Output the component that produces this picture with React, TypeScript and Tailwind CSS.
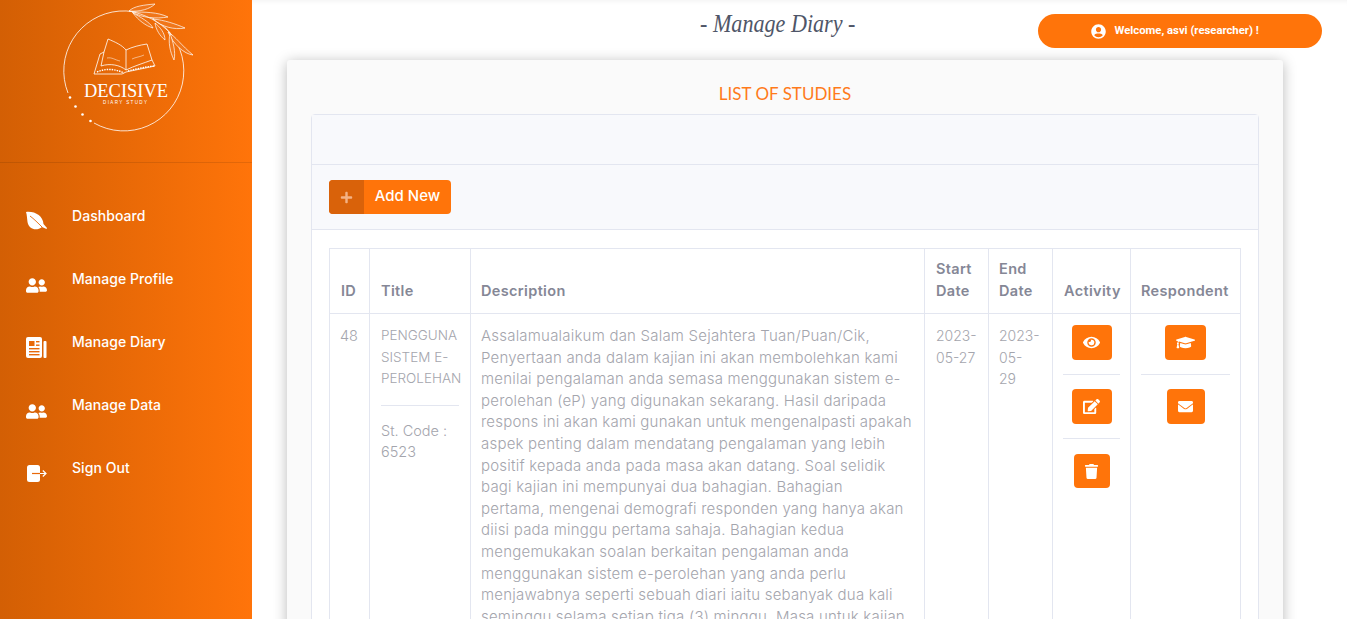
import { FaEdit, FaEnvelope, FaEye, FaGraduationCap, FaPlus, FaTrash, FaUserCircle, FaUserFriends } from 'react-icons/fa';

function LeafIcon() {
  return (
    <svg viewBox="0 0 21 21" className="mt-[6px] h-[21px] w-[21px]">
      <path d="M0 1 C9 0 17 5 17.500 13 L21 17 L20.500 18 L16 16 C11 20 3 19 1.500 11 C1 7 1 4 0 1 Z" fill="white" />
      <path d="M4 5 C8 8 12 12 16 16" fill="none" stroke="#e4690a" strokeWidth="0.9" />
    </svg>
  );
}

function PaperIcon() {
  return (
    <svg viewBox="0 0 21 21" className="mt-[6px] h-[21px] w-[21px]">
      <rect x="0" y="0" width="16" height="21" rx="2" fill="white" />
      <rect x="17.500" y="4" width="3" height="17" rx="1" fill="white" />
      <g fill="#e8690a">
        <rect x="3" y="4" width="5.500" height="5" />
        <rect x="10" y="4" width="3.500" height="1.400" />
        <rect x="10" y="7.500" width="3.500" height="1.400" />
        <rect x="3" y="11" width="10.500" height="1.400" />
        <rect x="3" y="14" width="10.500" height="1.400" />
        <rect x="3" y="17" width="10.500" height="1.400" />
      </g>
    </svg>
  );
}

function ExitIcon() {
  return (
    <svg viewBox="0 0 21 21" className="mt-[6px] h-[21px] w-[21px]">
      <rect x="1" y="2" width="13" height="17" rx="2.500" fill="white" />
      <path d="M6 10.500 H14" stroke="#e8690a" strokeWidth="1.200" />
      <path d="M14 10.500 H20 M16.800 7.500 L20 10.500 L16.800 13.500" fill="none" stroke="white" strokeWidth="1.200" />
    </svg>
  );
}

function UsersIcon() {
  return <FaUserFriends className="mt-[7px] h-[21px] w-[21px]" />;
}

const navItems = [
  { label: 'Dashboard', icon: LeafIcon },
  { label: 'Manage Profile', icon: UsersIcon },
  { label: 'Manage Diary', icon: PaperIcon },
  { label: 'Manage Data', icon: UsersIcon },
  { label: 'Sign Out', icon: ExitIcon },
];

const description = [
  'Assalamualaikum dan Salam Sejahtera Tuan/Puan/Cik,',
  'Penyertaan anda dalam kajian ini akan membolehkan kami',
  'menilai pengalaman anda semasa menggunakan sistem e-',
  'perolehan (eP) yang digunakan sekarang. Hasil daripada',
  'respons ini akan kami gunakan untuk mengenalpasti apakah',
  'aspek penting dalam mendatang pengalaman yang lebih',
  'positif kepada anda pada masa akan datang. Soal selidik',
  'bagi kajian ini mempunyai dua bahagian. Bahagian',
  'pertama, mengenai demografi responden yang hanya akan',
  'diisi pada minggu pertama sahaja. Bahagian kedua',
  'mengemukakan soalan berkaitan pengalaman anda',
  'menggunakan sistem e-perolehan yang anda perlu',
  'menjawabnya seperti sebuah diari iaitu sebanyak dua kali',
  'seminggu selama setiap tiga (3) minggu. Masa untuk kajian',
];

function Logo() {
  return (
    <svg width="140" height="135" viewBox="0 0 140 135" fill="none" stroke="white" strokeWidth="0.8">
      <path d="M8 93 A60 60 0 1 1 34 123" />
      <g fill="white" stroke="none">
        <circle cx="10" cy="97.500" r="1.300" />
        <circle cx="15.500" cy="106.500" r="1.300" />
        <circle cx="22.500" cy="114.500" r="1.300" />
        <circle cx="30.500" cy="121" r="1.300" />
      </g>
      {/* leaves */}
      <g strokeWidth="0.7" fill="#f0761a">
        <path d="M69 11 C74 6 84 5 95 4 C90 9 80 12 69 11 Z" />
        <path d="M72 12 C84 12 98 12 108 17 C96 19 82 18 72 12 Z" />
        <path d="M73 13 C80 17 90 22 93 28 C86 26 78 20 73 13 Z" />
        <path d="M93 19 C104 20 116 24 125 28 C114 30 102 27 93 19 Z" />
        <path d="M95 23 C100 27 105 33 105 40 C100 36 96 30 95 23 Z" />
        <path d="M108 32 C115 36 122 46 133 55 C124 54 113 44 108 32 Z" />
        <path d="M110 33 C113 42 116 52 114 60 C110 52 108 42 110 33 Z" />
        <path d="M69 11 C85 14 100 22 110 33" fill="none" />
      </g>
      {/* book */}
      <g strokeWidth="0.8">
        <path d="M34 74 L40 54 L44 52 L48 39 C55 42 62 45 66 50 C72 47 80 45 87 44 L92 60 L95 66 L66 72 L62 74 Z" />
        <path d="M66 50 L66 70 M44 52 L41 66 C50 63 60 65 66 70 C74 66 84 63 92 60" />
        <path d="M37 72 C46 68 56 69 64 73 M68 71 C76 69 85 67 94 66" strokeWidth="1.400" strokeDasharray="1.500 1" />
        <path d="M47 58 C52 57 55 60 60 61 M72 59 C76 57 80 57 84 55" strokeWidth="0.500" />
      </g>
      <text x="24" y="97" textLength="84" lengthAdjust="spacingAndGlyphs" fill="white" stroke="none" fontSize="19" fontFamily="'Liberation Serif', serif">DECISIVE</text>
      <text x="43" y="103.500" textLength="44" lengthAdjust="spacing" fill="white" stroke="none" fontSize="4.500" fontFamily="'Liberation Sans', sans-serif">DIARY STUDY</text>
    </svg>
  );
}

function IconButton({ icon: Icon, className }: { icon: typeof FaEye; className: string }) {
  return (
    <div className={`${className} mx-auto flex items-center justify-center rounded-[4px] bg-[#ff740a] text-white`}>
      <Icon />
    </div>
  );
}

export default function App() {
  return (
    <div className="flex h-[619px] w-[1347px] overflow-hidden bg-white font-['Inter',sans-serif]">
      <aside className="h-full w-[252px] shrink-0 bg-gradient-to-r from-[#d35f04] to-[#ff740a] text-white">
        <div className="h-[163px] border-b border-black/10 pl-[60px]">
          <Logo />
        </div>
        <nav className="flex flex-col gap-[33px] pt-[42px]">
          {navItems.map((item) => (
            <div key={item.label} className="flex h-[30px] items-start pl-[26px]">
              <item.icon />
              <span className="ml-[25px] text-[14px] leading-[22px] font-medium tracking-[0.05px]">{item.label}</span>
            </div>
          ))}
        </nav>
      </aside>

      <main className="min-w-0 flex-1 bg-white shadow-[inset_0_6px_6px_-6px_rgba(0,0,0,0.08)]">
        <header className="flex h-[60px]">
          <h1 className="mt-[9px] ml-[448px] origin-left scale-x-[0.885] font-['Liberation_Serif',serif] text-[25px] leading-[30px] whitespace-nowrap text-[#4f5668] italic">- Manage Diary -</h1>
          <div className="mt-[14px] ml-[162px] flex h-[34px] w-[284px] items-center justify-center gap-[9px] rounded-full bg-[#ff740a] pr-[10px] text-white">
            <FaUserCircle className="text-[15px]" />
            <span className="pt-[1px] font-['Roboto',sans-serif] text-[11.3px] font-bold">Welcome, asvi (researcher) !</span>
          </div>
        </header>

        <div className="ml-[35px] h-[700px] w-[996px] rounded-[3px] bg-[#fafafa] px-[24px] shadow-[0_2px_14px_rgba(0,0,0,0.28)]">
          <h2 className="pt-[23px] text-center font-['Lato',sans-serif] text-[17px] leading-[22px] font-normal text-[#ff7a1a]">LIST OF STUDIES</h2>
          <section className="mt-[9px] rounded-[4px] border border-[#e3e6f0] bg-white">
            <div className="h-[50px] border-b border-[#e3e6f0] bg-[#f8f9fc]" />
            <div className="h-[65px] border-b border-[#e3e6f0] bg-[#f8f9fc] px-[17px] pt-[15px]">
              <div className="flex h-[34px] w-[122px] overflow-hidden rounded-[4px] bg-[#ff740a] text-white">
                <span className="flex w-[35px] items-center justify-center bg-[#d9620a] text-[13px] text-[#f4b385]"><FaPlus /></span>
                <span className="flex-1 text-center text-[15px] leading-[32px] font-medium">Add New</span>
              </div>
            </div>
            <div className="px-[17px] py-[18px]">
              <table className="w-[911px] table-fixed border-collapse border border-[#e3e6f0] text-[14px] font-light text-[#a4a5ad]">
                <colgroup>
                  <col className="w-[40px]" />
                  <col className="w-[101px]" />
                  <col className="w-[454px]" />
                  <col className="w-[64px]" />
                  <col className="w-[64px]" />
                  <col className="w-[78px]" />
                  <col className="w-[110px]" />
                </colgroup>
                <thead className="text-left text-[14.5px] leading-[22px] font-semibold tracking-[0.35px] text-[#858796]">
                  <tr className="h-[65px]">
                    <th className="border border-[#e3e6f0] px-[11px] pb-[11px] align-bottom font-semibold">ID</th>
                    <th className="border border-[#e3e6f0] px-[11px] pb-[11px] align-bottom font-semibold">Title</th>
                    <th className="border border-[#e3e6f0] px-[10px] pb-[11px] align-bottom font-semibold">Description</th>
                    <th className="border border-[#e3e6f0] px-[11px] pb-[11px] align-bottom font-semibold">Start Date</th>
                    <th className="border border-[#e3e6f0] px-[10px] pb-[11px] align-bottom font-semibold">End Date</th>
                    <th className="border border-[#e3e6f0] px-[11px] pb-[11px] align-bottom font-semibold">Activity</th>
                    <th className="border border-[#e3e6f0] px-[10px] pb-[11px] align-bottom font-semibold">Respondent</th>
                  </tr>
                </thead>
                <tbody className="leading-[21.6px]">
                  <tr>
                    <td className="border border-[#e3e6f0] px-[10px] pt-[11px] align-top text-[14.5px]">48</td>
                    <td className="border border-[#e3e6f0] px-[11px] pt-[11px] align-top text-[13.5px]">
                      <div>PENGGUNA SISTEM E-PEROLEHAN</div>
                      <div className="mt-[15px] border-t border-[#e3e6f0] pt-[14px] text-[14.5px]">St. Code : 6523</div>
                    </td>
                    <td className="border border-[#e3e6f0] px-[10px] pt-[11px] align-top text-[15px] tracking-[0.21px] whitespace-nowrap">
                      {description.map((line) => (
                        <div key={line}>{line}</div>
                      ))}
                    </td>
                    <td className="border border-[#e3e6f0] px-[11px] pt-[11px] align-top">
                      <div>2023-</div>
                      <div>05-27</div>
                    </td>
                    <td className="border border-[#e3e6f0] px-[10px] pt-[11px] align-top">
                      <div>2023-</div>
                      <div>05-</div>
                      <div>29</div>
                    </td>
                    <td className="border border-[#e3e6f0] px-[10px] pt-[11px] align-top">
                      <IconButton icon={FaEye} className="h-[35px] w-[40px] text-[17px]" />
                      <div className="my-[14px] border-t border-[#e3e6f0]" />
                      <IconButton icon={FaEdit} className="h-[35px] w-[40px] text-[17px]" />
                      <div className="mt-[14px] mb-[15px] border-t border-[#e3e6f0]" />
                      <IconButton icon={FaTrash} className="h-[34px] w-[36px] text-[15px]" />
                    </td>
                    <td className="border border-[#e3e6f0] px-[10px] pt-[11px] align-top">
                      <IconButton icon={FaGraduationCap} className="h-[35px] w-[41px] text-[19px]" />
                      <div className="my-[14px] border-t border-[#e3e6f0]" />
                      <IconButton icon={FaEnvelope} className="h-[35px] w-[38px] text-[15px]" />
                    </td>
                  </tr>
                </tbody>
              </table>
            </div>
          </section>
        </div>
      </main>
    </div>
  );
}
